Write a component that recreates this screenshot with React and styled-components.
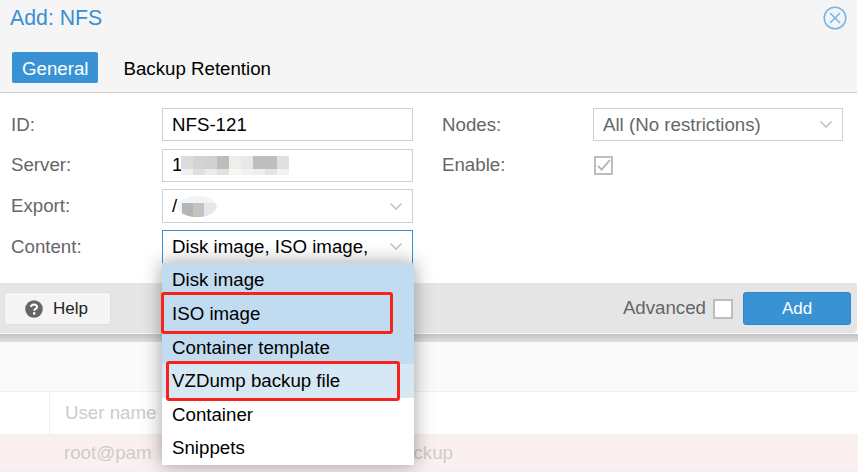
import React from "react";
import styled, { createGlobalStyle } from "styled-components";

const GlobalStyle = createGlobalStyle`
  html, body {
    margin: 0;
    padding: 0;
    background: #fff;
    font-family: "Liberation Sans", Arial, sans-serif;
  }
`;

const Chevron = () => (
  <svg width="14" height="9" viewBox="0 0 14 9" fill="none">
    <path d="M1.5 1.5 L7 7 L12.5 1.5" stroke="#c4c4c4" strokeWidth="1.6" />
  </svg>
);

const CloseIcon = () => (
  <svg width="24" height="24" viewBox="0 0 24 24" fill="none">
    <circle cx="12" cy="12" r="10.8" fill="#f0f5fa" stroke="#7fb2de" strokeWidth="1.5" />
    <path d="M7 7 L17 17 M17 7 L7 17" stroke="#7fb2de" strokeWidth="1.5" />
  </svg>
);

const HelpIcon = () => (
  <svg width="18" height="18" viewBox="0 0 18 18">
    <circle cx="9" cy="9" r="8.8" fill="#666" />
    <path d="M6 7 C6 3.6 12 3.6 12 7 C12 9 9.2 8.8 9.2 10.8" fill="none" stroke="#fff" strokeWidth="2" />
    <rect x="8" y="12.2" width="2.4" height="2.4" fill="#fff" />
  </svg>
);

const CheckIcon = () => (
  <svg width="15" height="13" viewBox="0 0 16 14" fill="none">
    <path d="M2 7.5 L6 11.5 L15 1" stroke="#b5b5b5" strokeWidth="2" />
  </svg>
);

const MosaicSvg = styled.svg`
  margin-left: -1.5px;
`;

// pixelated smudges hiding the address and the export path
const ServerMosaic = () => (
  <MosaicSvg width="108" height="19" viewBox="0 0 108 19">
    {[
      ["#dcdcdc", 0, 0, 13], ["#d4d2d4", 12, 0, 13], ["#d2d0d2", 24, 0, 13], ["#bdbdbd", 36, 0, 13], ["#f1eeea", 48, 0, 13],
      ["#e6e9ec", 60, 0, 13], ["#bfbdbd", 72, 0, 13], ["#bfbdbd", 84, 0, 13], ["#e0e0e0", 96, 0, 13],
      ["#f0f0f0", 0, 13, 6], ["#e0e0e0", 12, 13, 6], ["#ececec", 24, 13, 6], ["#e2e2e2", 36, 13, 6], ["#f6f6f4", 48, 13, 6],
      ["#f1f2f3", 60, 13, 6], ["#eeeeee", 72, 13, 6], ["#e4e4e4", 84, 13, 6], ["#f2f2f2", 96, 13, 6],
    ].map(([color, x, y, h]) => (
      <rect key={`${x}-${y}`} x={x} y={y} width="12" height={h} fill={color} />
    ))}
  </MosaicSvg>
);

const ExportMosaic = () => (
  <svg width="40" height="21" viewBox="0 0 40 21">
    <defs>
      <clipPath id="smudge">
        <ellipse cx="20" cy="10.5" rx="19.5" ry="10.5" />
      </clipPath>
    </defs>
    <g clipPath="url(#smudge)">
      <rect x="0" y="0" width="40" height="21" fill="#f3f3f5" />
      <rect x="5" y="7" width="11" height="14" fill="#b3b6b8" />
      <rect x="16" y="7" width="11" height="14" fill="#c8c2bc" />
      <rect x="27" y="7" width="13" height="14" fill="#e4e6f0" />
    </g>
  </svg>
);

const Page = styled.div`
  position: relative;
  width: 858px;
  height: 472px;
  overflow: hidden;
  background: #fff;
`;

const Dialog = styled.div`
  position: relative;
  z-index: 1;
  width: 857px;
  border-radius: 0 0 5px 0;
  background: #fff;

  &::after {
    content: "";
    position: absolute;
    top: 100%;
    left: 0;
    right: -1px;
    height: 8px;
    background: linear-gradient(#c4c4c4, #e0e0e0);
  }
`;

const Header = styled.div`
  height: 92px;
  box-sizing: border-box;
  padding: 6px 10px 0 10px;
  background: #f5f5f5;
`;

const TitleRow = styled.div`
  display: flex;
  justify-content: space-between;
  align-items: center;
  height: 24px;
`;

const Title = styled.div`
  font-size: 21.3px;
  color: #3a8fd3;
`;

const Tabs = styled.div`
  display: flex;
  align-items: center;
  gap: 25px;
  margin: 22px 0 0 2px;
`;

const Tab = styled.div`
  display: flex;
  align-items: center;
  justify-content: center;
  height: 31px;
  box-sizing: border-box;
  padding: ${(p) => (p.$active ? "2px 10px 0" : "2px 0 0")};
  border-radius: 2px;
  font-size: 18.7px;
  background: ${(p) => (p.$active ? "#3892d4" : "transparent")};
  color: ${(p) => (p.$active ? "#fff" : "#000")};
`;

const Body = styled.div`
  height: 191px;
  box-sizing: border-box;
  padding: 14.8px 14px 0 11px;
  border-top: 1px solid #cfcfcf;
  display: grid;
  grid-template-columns: 402px 1fr;
  gap: 29px;
`;

const Column = styled.div`
  display: flex;
  flex-direction: column;
  gap: 7.2px;
`;

const Row = styled.div`
  display: flex;
  align-items: center;
  min-height: 33.6px;
`;

const Label = styled.div`
  width: ${(p) => p.$width}px;
  flex: none;
  font-size: 18.7px;
  color: #666;
`;

const Field = styled.div`
  position: relative;
  flex: 1;
  display: flex;
  align-items: center;
  justify-content: space-between;
  height: 33.6px;
  box-sizing: border-box;
  padding: 0 9px;
  border: 1px solid ${(p) => (p.$focus ? "#3892d4" : "#cfcfcf")};
  font-size: 18.7px;
  color: ${(p) => (p.$muted ? "#666" : "#000")};
  white-space: nowrap;
`;

const Masked = styled.span`
  display: flex;
  align-items: center;
`;

const Checkbox = styled.div`
  display: flex;
  align-items: center;
  justify-content: center;
  width: 20px;
  height: 20px;
  box-sizing: border-box;
  background: #fff;
  border: 2px solid #bdbdbd;
`;

const EnableCheckbox = styled(Checkbox)`
  width: 19px;
  height: 19px;
  margin: 1px 0 0 1px;
`;

const Footer = styled.div`
  display: flex;
  align-items: center;
  justify-content: space-between;
  height: 51px;
  box-sizing: border-box;
  padding: 1px 6px 0 4px;
  background: #e5e5e5;
  border-bottom: 1px solid #f5f5f5;
  border-radius: 0 0 5px 0;
`;

const FooterRight = styled.div`
  display: flex;
  align-items: center;
`;

const HelpButton = styled.div`
  display: flex;
  align-items: center;
  gap: 10px;
  width: 107px;
  height: 33px;
  box-sizing: border-box;
  padding-left: 20px;
  background: #f5f5f5;
  border: 1px solid #dedede;
  border-radius: 3px;
  font-size: 17px;
  color: #222;
`;

const AdvancedLabel = styled.span`
  font-size: 18.7px;
  color: #666;
  margin: -1px 7px 0 0;
`;

const AddButton = styled.div`
  display: flex;
  align-items: center;
  justify-content: center;
  width: 108px;
  height: 33px;
  box-sizing: border-box;
  margin-left: 10px;
  background: #3892d4;
  border: 1px solid #2f86c8;
  border-radius: 3px;
  font-size: 17px;
  color: #fff;
`;

const Dropdown = styled.div`
  position: absolute;
  z-index: 2;
  top: 32px;
  left: -1px;
  width: 252px;
  background: #fff;
  box-shadow: 0 0 18px rgba(0, 0, 0, 0.38);
`;

const Option = styled.div`
  height: 33.6px;
  box-sizing: border-box;
  padding: 1px 0 0 10px;
  display: flex;
  align-items: center;
  font-size: 18.7px;
  color: #000;
  background: ${(p) => (p.$selected ? "#c1dbf0" : p.$hover ? "#d7e8f5" : "#fff")};
`;

const Marker = styled.div`
  position: absolute;
  box-sizing: border-box;
  left: ${(p) => p.$left}px;
  top: ${(p) => p.$top}px;
  width: ${(p) => p.$width}px;
  height: ${(p) => p.$height}px;
  border: 3px solid #f5231c;
  border-radius: 3px;
`;

const Grid = styled.div`
  color: #ccc;
  font-size: 18.7px;
`;

const GridHead = styled.div`
  height: 58px;
  box-sizing: border-box;
  background: #fafafa;
  border-bottom: 1px solid #efefef;
`;

const GridRow = styled.div`
  display: flex;
  align-items: center;
  height: ${(p) => p.$height}px;
  box-sizing: border-box;
  background: ${(p) => (p.$error ? "#faf0f0" : "#fff")};
  border-bottom: 1px solid #efefef;
`;

const NumberCell = styled.div`
  width: 49px;
  align-self: stretch;
  flex: none;
  border-right: ${(p) => (p.$bordered ? "1px solid #efefef" : "none")};
`;

const UserCell = styled.div`
  width: 300px;
  flex: none;
  padding-left: 15px;
  box-sizing: border-box;
`;

const BackupCell = styled.div`
  width: 104px;
  text-align: right;
`;

const options = [
  { text: "Disk image", selected: true },
  { text: "ISO image", selected: true },
  { text: "Container template", selected: true },
  { text: "VZDump backup file", hover: true },
  { text: "Container" },
  { text: "Snippets" },
];

export default function App() {
  return (
    <Page>
      <GlobalStyle />
      <Dialog>
        <Header>
          <TitleRow>
            <Title>Add: NFS</Title>
            <CloseIcon />
          </TitleRow>
          <Tabs>
            <Tab $active>General</Tab>
            <Tab>Backup Retention</Tab>
          </Tabs>
        </Header>
        <Body>
          <Column>
            <Row>
              <Label $width={151}>ID:</Label>
              <Field>NFS-121</Field>
            </Row>
            <Row>
              <Label $width={151}>Server:</Label>
              <Field>
                <Masked>
                  1
                  <ServerMosaic />
                </Masked>
              </Field>
            </Row>
            <Row>
              <Label $width={151}>Export:</Label>
              <Field>
                <Masked>
                  /
                  <ExportMosaic />
                </Masked>
                <Chevron />
              </Field>
            </Row>
            <Row>
              <Label $width={151}>Content:</Label>
              <Field $focus>
                Disk image, ISO image,
                <Chevron />
                <Dropdown>
                  {options.map((o) => (
                    <Option key={o.text} $selected={o.selected} $hover={o.hover}>
                      {o.text}
                    </Option>
                  ))}
                  <Marker $left={-1} $top={28.5} $width={232} $height={42.5} />
                  <Marker $left={4} $top={98} $width={234} $height={40} />
                </Dropdown>
              </Field>
            </Row>
          </Column>
          <Column>
            <Row>
              <Label $width={151}>Nodes:</Label>
              <Field $muted>
                All (No restrictions)
                <Chevron />
              </Field>
            </Row>
            <Row>
              <Label $width={151}>Enable:</Label>
              <EnableCheckbox>
                <CheckIcon />
              </EnableCheckbox>
            </Row>
          </Column>
        </Body>
        <Footer>
          <HelpButton>
            <HelpIcon />
            Help
          </HelpButton>
          <FooterRight>
            <AdvancedLabel>Advanced</AdvancedLabel>
            <Checkbox />
            <AddButton>Add</AddButton>
          </FooterRight>
        </Footer>
      </Dialog>
      <Grid>
        <GridHead />
        <GridRow $height={43}>
          <NumberCell $bordered />
          <UserCell>User name</UserCell>
        </GridRow>
        <GridRow $height={37} $error>
          <NumberCell />
          <UserCell>root@pam</UserCell>
          <BackupCell>ackup</BackupCell>
        </GridRow>
      </Grid>
    </Page>
  );
}
